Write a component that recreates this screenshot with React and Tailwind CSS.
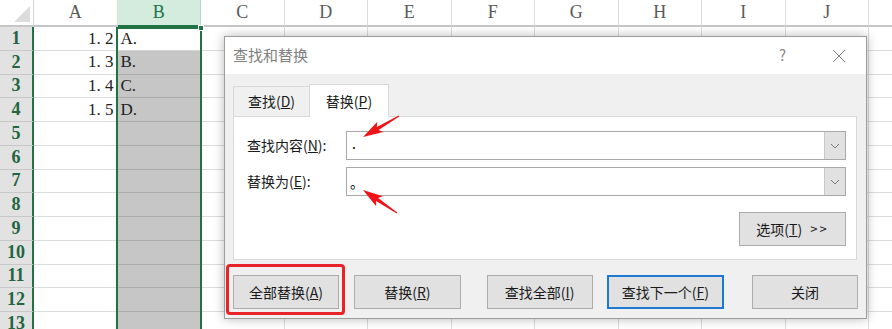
import React from 'react'

const cols = ['A', 'B', 'C', 'D', 'E', 'F', 'G', 'H', 'I', 'J', '']
const rows = [1, 2, 3, 4, 5, 6, 7, 8, 9, 10, 11, 12, 13]
const aVals = { 1: '1. 2', 2: '1. 3', 3: '1. 4', 4: '1. 5' }
const bVals = { 1: 'A.', 2: 'B.', 3: 'C.', 4: 'D.' }

const serif = { fontFamily: '"Liberation Serif", "Noto Serif", serif' }

// arrow polygon from tail to tip
const arrowPts = (tx, ty, px, py) => {
  const dx = px - tx, dy = py - ty
  const len = Math.hypot(dx, dy)
  const ux = dx / len, uy = dy / len
  const nx = -uy, ny = ux
  const hb = 17
  const bx = px - ux * hb, by = py - uy * hb
  const p = (x, y) => `${x.toFixed(1)},${y.toFixed(1)}`
  return [
    p(tx + nx * 0.6, ty + ny * 0.6),
    p(bx + nx * 1.8, by + ny * 1.8),
    p(bx - ux * 3 + nx * 6, by - uy * 3 + ny * 6),
    p(px, py),
    p(bx - ux * 3 - nx * 6, by - uy * 3 - ny * 6),
    p(bx - nx * 1.8, by - ny * 1.8),
    p(tx - nx * 0.6, ty - ny * 0.6),
  ].join(' ')
}

const Chevron = () => (
  <svg width="10" height="6" viewBox="0 0 10 6">
    <polyline points="1,1 5,5 9,1" fill="none" stroke="#7a7a7a" strokeWidth="1" />
  </svg>
)

const Btn = ({ children, className = '', border = 'border border-[#adadad]' }) => (
  <div className={`h-[34px] flex items-center justify-center bg-[#e1e1e1] ${border} text-[14px] text-[#1a1a1a] ${className}`}>
    {children}
  </div>
)

const Sheet = () => (
  <div className="flex flex-col">
    <div className="flex h-[27px]">
      <div className="w-[34px] shrink-0 h-full bg-white border-r border-[#d4d4d4] border-b-2 border-b-[#c6c6c6] relative">
        <div className="absolute right-[3px] bottom-[3px] w-0 h-0 border-l-[16px] border-l-transparent border-b-[16px] border-b-[#dcdcdc]" />
      </div>
      {cols.map((c, i) => (
        <div
          key={i}
          style={serif}
          className={`w-[83.5px] shrink-0 h-full flex items-center justify-center text-[18px] border-r ${
            c === 'B'
              ? 'bg-[#d3ecdd] text-[#217346] border-[#b9d8c5] border-b-2 border-b-[#217346]'
              : 'bg-white text-[#5a5a5a] border-[#dcdcdc] border-b-2 border-b-[#c6c6c6]'
          }`}
        >
          {c}
        </div>
      ))}
    </div>
    {rows.map((r) => (
      <div key={r} className="flex h-[23.75px]">
        <div
          style={serif}
          className="w-[34px] shrink-0 h-full bg-[#e2e2e2] border-r-2 border-r-[#217346] border-b border-b-[#c8c8c8] flex items-center justify-center text-[18px] font-semibold text-[#22653f]"
        >
          {r}
        </div>
        {cols.map((c, i) => (
          <div
            key={i}
            style={serif}
            className={`w-[83.5px] shrink-0 h-full flex items-center text-[17px] text-[#222] border-r border-b ${
              c === 'B'
                ? r === 1
                  ? 'bg-white border-[#d4d4d4] pl-[3px]'
                  : 'bg-[#c6c6c6] border-[#adadad] pl-[3px]'
                : c === 'A'
                ? 'bg-white border-[#dcdcdc] justify-end pr-[3px]'
                : 'bg-white border-[#dcdcdc]'
            }`}
          >
            {c === 'A' ? aVals[r] : c === 'B' ? bVals[r] : null}
          </div>
        ))}
      </div>
    ))}
  </div>
)

const Dialog = () => (
  <div
    className="absolute left-[224px] top-[36px] w-[643px] h-[283px] bg-[#f0f0f0] border border-[#9c9c9c] shadow-[0_0_10px_rgba(0,0,0,0.28)] flex flex-col"
    style={{ fontFamily: '"Noto Sans CJK SC", "Noto Sans", sans-serif' }}
  >
    <div className="h-[37px] bg-white flex items-center pl-[8px] pr-[20px] shrink-0">
      <span className="text-[15px] text-[#808080]">查找和替换</span>
      <span className="ml-auto text-[15px] text-[#8a8a8a] mr-[46px]">?</span>
      <svg width="14" height="14" viewBox="0 0 14 14">
        <path d="M1 1 L13 13 M13 1 L1 13" stroke="#808080" strokeWidth="1" />
      </svg>
    </div>
    <div className="flex flex-col px-[8px] pt-[10px]">
      <div className="flex items-end h-[32px]">
        <div className="w-[76px] h-[30px] flex items-center justify-center text-[14px] text-[#1a1a1a] border-t border-l border-[#d9d9d9]">
          查找(<u>D</u>)
        </div>
        <div className="w-[80px] h-[33px] -mb-px relative z-10 bg-white flex items-center justify-center text-[14px] text-[#1a1a1a] border-t border-l border-r border-[#d9d9d9]">
          替换(<u>P</u>)
        </div>
      </div>
      <div className="w-[624px] h-[144px] bg-white border border-[#d9d9d9] flex flex-col pt-[14px] pl-[13px] pr-[10px]">
        <div className="flex items-center h-[29px]">
          <span className="w-[99px] text-[14px] text-[#1a1a1a]">查找内容(<u>N</u>):</span>
          <div className="flex-1 h-full border border-[#a8a8a8] flex">
            <div className="flex-1 pl-[5px] text-[14px] leading-[22px]">.</div>
            <div className="w-[21px] bg-[#e1e1e1] border-l border-[#c8c8c8] flex items-center justify-center">
              <Chevron />
            </div>
          </div>
        </div>
        <div className="flex items-center h-[29px] mt-[7px]">
          <span className="w-[99px] text-[14px] text-[#1a1a1a]">替换为(<u>E</u>):</span>
          <div className="flex-1 h-full border border-[#a8a8a8] flex">
            <div className="flex-1 pl-[3px] text-[14px] leading-[28px]">。</div>
            <div className="w-[21px] bg-[#e1e1e1] border-l border-[#c8c8c8] flex items-center justify-center">
              <Chevron />
            </div>
          </div>
        </div>
        <div className="flex justify-end mt-[16px]">
          <Btn className="w-[107px] h-[33px]">
            选项(<u>T</u>)<span className="ml-[8px] text-[13px] tracking-[2px]">&gt;&gt;</span>
          </Btn>
        </div>
      </div>
      <div className="flex items-center mt-[15px]">
        <div className="relative">
          <Btn className="w-[106px]">全部替换(<u>A</u>)</Btn>
          <div className="absolute left-[-7px] right-[-6px] top-[-11px] bottom-[-6px] border-[3px] border-[#e8232a] rounded-[4px]" />
        </div>
        <Btn className="w-[107px] ml-[15px]">替换(<u>R</u>)</Btn>
        <Btn className="w-[106px] ml-[26px]">查找全部(<u>I</u>)</Btn>
        <Btn className="w-[118px] ml-[14px]" border="border-2 border-[#1f78d1]">查找下一个(<u>F</u>)</Btn>
        <Btn className="w-[106px] ml-[28px]">关闭</Btn>
      </div>
    </div>
  </div>
)

export default function App() {
  return (
    <div className="relative w-[892px] h-[329px] overflow-hidden bg-white">
      <Sheet />
      {/* selection outline for column B */}
      <div className="absolute left-[116px] top-[27px] w-[86px] h-[310px] border-2 border-[#217346] pointer-events-none" />
      <div className="absolute left-[198px] top-[25px] w-[6px] h-[6px] bg-[#217346] border border-white" />
      <Dialog />
      <svg className="absolute left-0 top-0 pointer-events-none" width="892" height="329">
        <polygon points={arrowPts(399, 116, 363, 137)} fill="#f0141a" />
        <polygon points={arrowPts(397, 213, 363, 190)} fill="#f0141a" />
      </svg>
    </div>
  )
}
